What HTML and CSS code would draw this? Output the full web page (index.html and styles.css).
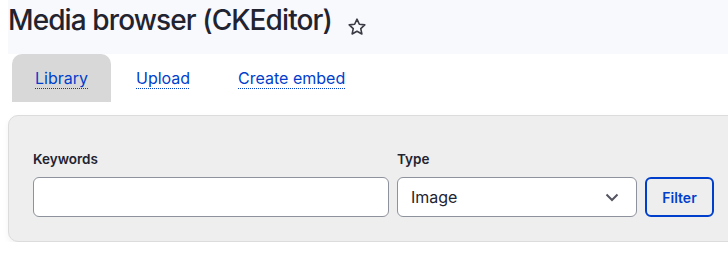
FILE: index.html
```html
<!DOCTYPE html>
<html lang="en">
<head>
  <meta charset="UTF-8">
  <title>Media browser (CKEditor)</title>
  <link rel="stylesheet" href="styles.css">
</head>
<body>
  <div class="page-header">
    <h1 class="page-title">Media browser (CKEditor)</h1>
    <svg class="star" width="20" height="20" viewBox="0 0 20 20">
      <path d="M10 2.2l2.35 5.05 5.45.6-4.05 3.7 1.12 5.4L10 14.2l-4.87 2.75 1.12-5.4-4.05-3.7 5.45-.6z" fill="none" stroke="#3b3b45" stroke-width="1.6" stroke-linejoin="round"/>
    </svg>
  </div>

  <ul class="tabs">
    <li class="tab active"><a href="#">Library</a></li>
    <li class="tab"><a href="#">Upload</a></li>
    <li class="tab"><a href="#">Create embed</a></li>
  </ul>

  <form class="filters">
    <div class="form-item keywords">
      <label for="keywords">Keywords</label>
      <input type="text" id="keywords">
    </div>
    <div class="form-item type">
      <label for="type">Type</label>
      <div class="select">
        <span>Image</span>
        <svg width="14" height="9" viewBox="0 0 14 9"><path d="M1.5 1.5l5.5 5.5 5.5-5.5" fill="none" stroke="#545560" stroke-width="2"/></svg>
      </div>
    </div>
    <button type="button" class="button">Filter</button>
  </form>
</body>
</html>
```

FILE: styles.css
```css
body {
  margin: 0;
  font-family: Inter, "Noto Sans", sans-serif;
  color: #222330;
  background: white;
  overflow: hidden;
}
.page-header {
  margin-left: 8px;
  height: 54px;
  background: #f8f9fc;
  display: flex;
  align-items: flex-start;
}
.page-title {
  margin: 0;
  padding-top: 2px;
  font-size: 28px;
  font-weight: 500;
  letter-spacing: -0.9px;
  line-height: 36px;
  color: #222330;
}
.star {
  margin: 17px 0 0 15px;
}
.tabs {
  list-style: none;
  margin: 0;
  padding: 0 0 0 12px;
  display: flex;
}
.tab a {
  display: block;
  padding: 0 23px;
  height: 48px;
  line-height: 48px;
  font-size: 16px;
  color: #003ecc;
  text-decoration: underline dotted;
  text-underline-offset: 4px;
  text-decoration-thickness: 1px;
  text-decoration-color: #003ecc;
}
.tab.active a {
  background: #d8d8d8;
  border-radius: 10px 10px 0 0;
}
.tab + .tab a {
  padding-left: 25px;
}
.filters {
  margin: 13px 0 0 8px;
  width: 760px;
  box-sizing: border-box;
  padding: 34px 24px 24px;
  background: #eeeeee;
  border: 1px solid #dcdcdf;
  border-radius: 10px;
  box-shadow: 0 3px 6px rgba(0,0,0,0.05);
  display: flex;
  align-items: flex-end;
  gap: 8px;
}
.form-item label {
  display: block;
  font-size: 13.5px;
  font-weight: 600;
  margin-bottom: 9px;
  line-height: 18px;
}
.keywords input {
  display: block;
  box-sizing: border-box;
  width: 356px;
  height: 40px;
  border: 1px solid #8e929c;
  border-radius: 6px;
  background: white;
}
.select {
  box-sizing: border-box;
  width: 240px;
  height: 40px;
  border: 1px solid #8e929c;
  border-radius: 6px;
  background: white;
  display: flex;
  align-items: center;
  justify-content: space-between;
  padding: 0 17px 0 13px;
  font-size: 16px;
}
.button {
  box-sizing: border-box;
  height: 40px;
  width: 69px;
  border: 2px solid #003ecc;
  border-radius: 6px;
  background: transparent;
  color: #003ecc;
  font-family: inherit;
  font-size: 14px;
  font-weight: 600;
}
```
